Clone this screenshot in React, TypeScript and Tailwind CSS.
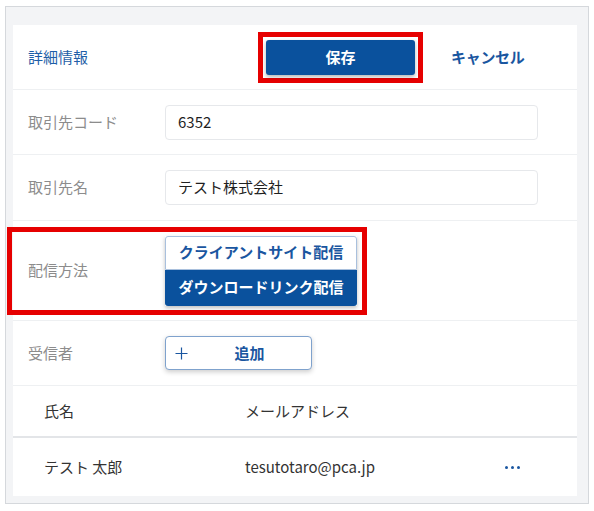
const font = '[font-family:"Noto_Sans_CJK_JP","Noto_Sans",sans-serif]'

function FieldRow({
  label,
  className,
  children,
}: {
  label: string
  className: string
  children: React.ReactNode
}) {
  return (
    <div className={`relative flex items-center border-b border-[#eef0f2] pl-[15px] ${className}`}>
      <div className="w-[137px] text-[15px] text-[#8c8c8c]">{label}</div>
      {children}
    </div>
  )
}

function TextBox({ value }: { value: string }) {
  return (
    <div className="flex h-[35px] w-[373px] items-center rounded-[4px] border border-[#e6e8eb] px-[12px] text-[15px] text-[#1f1f1f]">
      {value}
    </div>
  )
}

export default function App() {
  return (
    <div className={`h-[511px] w-[594px] bg-white pl-[5px] pt-[6px] ${font}`}>
      <div className="h-[498px] w-[584px] border border-[#d5d8dc] bg-[#f3f4f6] pl-[7px] pt-[18px]">
        <div className="w-[564px] bg-white">
          <div className="flex h-[65px] items-center border-b border-[#eef0f2] pl-[15px]">
            <div className="w-[230px] text-[15px] text-[#1f5fa8]">詳細情報</div>
            <div className="border-[5px] border-[#e60000] p-[3px]">
              <button className="flex h-[35px] w-[149px] items-center justify-center rounded-[3px] bg-[#0a519d] text-[15px] font-bold text-white shadow-[0_2px_4px_rgba(0,0,0,0.3)]">
                保存
              </button>
            </div>
            <div className="ml-[28px] text-[15px] font-bold tracking-[-0.02em] text-[#1a56a0]">
              キャンセル
            </div>
          </div>

          <FieldRow label="取引先コード" className="h-[65px]">
            <TextBox value="6352" />
          </FieldRow>

          <FieldRow label="取引先名" className="h-[66px]">
            <TextBox value="テスト株式会社" />
          </FieldRow>

          <FieldRow label="配信方法" className="h-[100px]">
            <div className="flex w-[192px] flex-col shadow-[0_2px_4px_rgba(0,0,0,0.25)]">
              <button className="flex h-[34px] items-center justify-center rounded-t-[3px] border border-[#a9c0dd] bg-white text-[15px] font-bold text-[#1a56a0]">
                クライアントサイト配信
              </button>
              <button className="flex h-[36px] items-center justify-center rounded-b-[3px] bg-[#0a519d] text-[15px] font-bold text-white">
                ダウンロードリンク配信
              </button>
            </div>
            <div className="pointer-events-none absolute left-[-6px] top-[6px] h-[88px] w-[360px] border-[5px] border-[#e60000]" />
          </FieldRow>

          <FieldRow label="受信者" className="h-[65px]">
            <button className="flex h-[34px] w-[147px] items-center rounded-[4px] border border-[#7fa2cd] bg-white pl-[9px] text-[#1a56a0] shadow-[0_2px_5px_rgba(0,0,0,0.2)]">
              <svg width="13" height="13" viewBox="0 0 13 13" className="shrink-0">
                <path d="M6.5 0.5v12M0.5 6.5h12" stroke="#1a56a0" strokeWidth="1.2" fill="none" />
              </svg>
              <span className="flex-1 text-center text-[15px] font-bold">追加</span>
            </button>
          </FieldRow>

          <div className="flex h-[52px] items-center border-b-2 border-[#e3e5e8] text-[15px] text-[#333]">
            <div className="w-[232px] pl-[31px]">氏名</div>
            <div>メールアドレス</div>
          </div>

          <div className="flex h-[58px] items-center text-[15px] text-[#333]">
            <div className="w-[232px] pl-[31px]">テスト 太郎</div>
            <div className="w-[260px]">tesutotaro@pca.jp</div>
            <div className="flex gap-[3px]">
              <span className="h-[3px] w-[3px] rounded-full bg-[#1a56a0]" />
              <span className="h-[3px] w-[3px] rounded-full bg-[#1a56a0]" />
              <span className="h-[3px] w-[3px] rounded-full bg-[#1a56a0]" />
            </div>
          </div>
        </div>
      </div>
    </div>
  )
}
